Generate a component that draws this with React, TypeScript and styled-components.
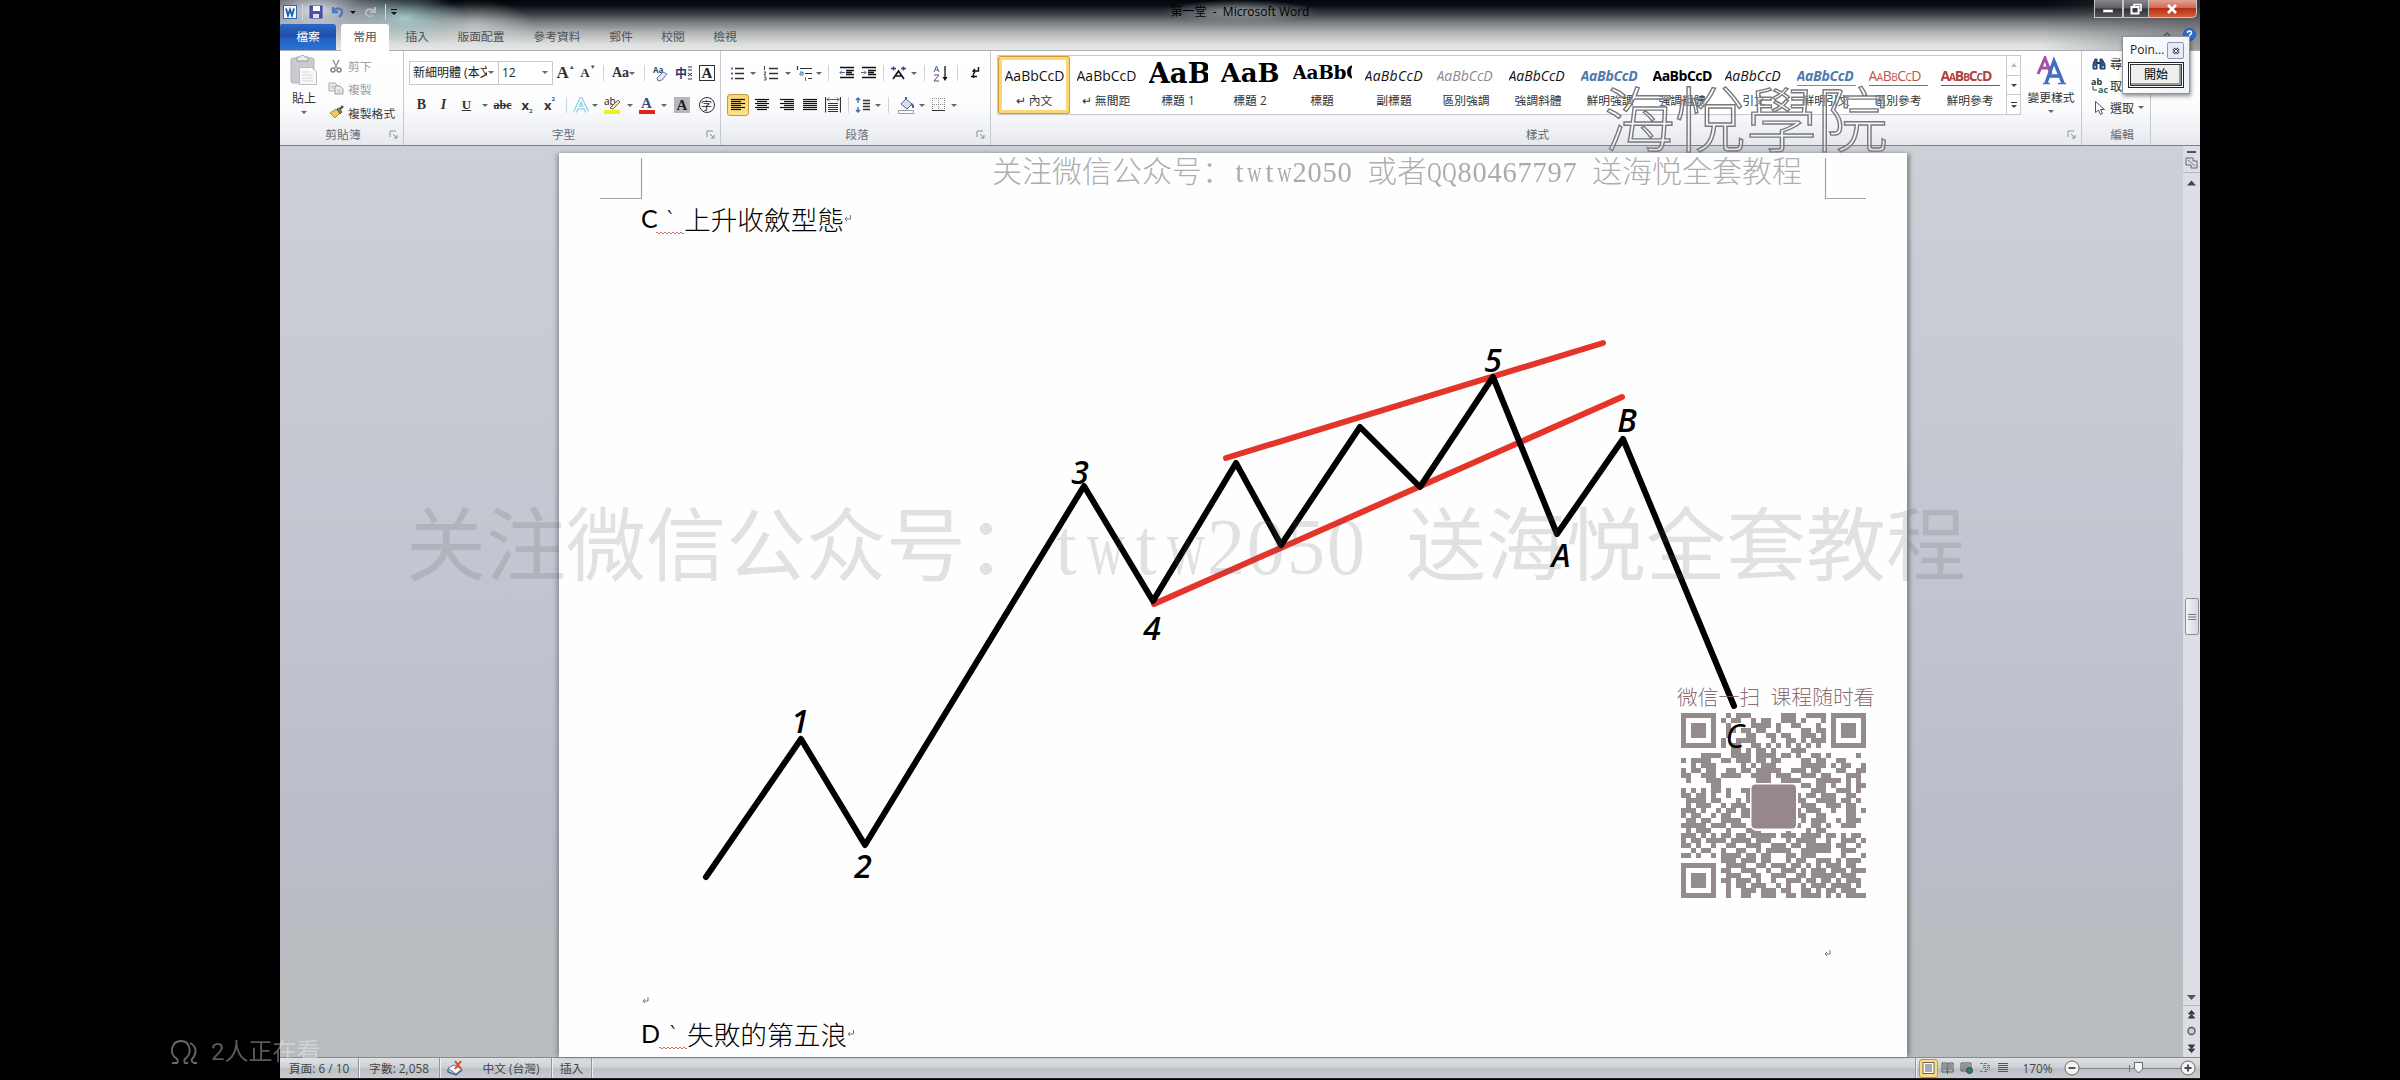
import React from 'react';
import styled, { createGlobalStyle, css } from 'styled-components';

const UI = '"Open Sans", "Noto Sans CJK TC", sans-serif';

const Global = createGlobalStyle`
  html, body { margin: 0; padding: 0; background: #000; }
  * { box-sizing: border-box; }
`;

/* ---------- frame ---------- */
const Stage = styled.div`
  position: relative;
  width: 2400px;
  height: 1080px;
  padding-left: 280px;
  background: #000;
  display: flex;
  overflow: hidden;
  font-family: ${UI};
  font-size: 12px;
  color: #333;
`;
const Win = styled.div`
  width: 1920px;
  height: 1080px;
  display: flex;
  flex-direction: column;
  background: #000;
`;
const Head = styled.header`
  height: 51px;
  display: flex;
  flex-direction: column;
  background:
    radial-gradient(ellipse 60px 26px at 125px 18px, rgba(190, 232, 232, 0.75), transparent),
    radial-gradient(ellipse 90px 34px at 35px 10px, rgba(226, 230, 240, 0.95), transparent),
    radial-gradient(ellipse 60px 26px at 195px 26px, rgba(225, 230, 230, 0.55), transparent),
    linear-gradient(90deg, transparent 1760px, rgba(90, 92, 98, 0.55) 1920px),
    linear-gradient(#02070c 0, #060c12 5px, #33383d 13px, #777a7c 22px, #b4b6b6 33px, #dcdfde 44px, #e6e8e8 50px);
  border-bottom: 1px solid #a9adb2;
`;
const TitleRow = styled.div`
  height: 24px;
  display: flex;
  justify-content: space-between;
  align-items: flex-start;
`;
const Quick = styled.div`
  width: 543px;
  height: 24px;
  padding-left: 2px;
  display: flex;
  align-items: center;
`;
const Title = styled.div`
  height: 24px;
  line-height: 23px;
  padding: 0 8px;
  font-size: 12px;
  white-space: pre;
  color: #000;
  background: radial-gradient(ellipse at center, rgba(150, 154, 158, 0.75) 20%, transparent 72%);
`;
const WinButtons = styled.div`
  width: 543px;
  padding-right: 3px;
  display: flex;
  justify-content: flex-end;
`;
const WinButton = styled.div<{ $w: number; $close?: boolean }>`
  width: ${p => p.$w}px;
  height: 18px;
  display: flex;
  align-items: center;
  justify-content: center;
  border: 1px solid #c3c5c9;
  border-top: 0;
  border-left-width: ${p => (p.$close ? 0 : 1)}px;
  border-radius: ${p => (p.$close ? '0 0 5px 0' : '0')};
  background: ${p => (p.$close
    ? 'linear-gradient(#dfa493, #cf6a55 45%, #b92d12 50%, #d4603f)'
    : 'linear-gradient(#85878b, #5b5d62 48%, #2e3035 52%, #55575c)')};
`;
const Tabs = styled.nav`
  height: 26px;
  display: flex;
  align-items: stretch;
`;
const Tab = styled.div<{ $w: number; $kind?: 'file' | 'on' }>`
  width: ${p => p.$w}px;
  text-align: center;
  line-height: 25px;
  font-size: 11.8px;
  color: #4e5257;
  ${p => p.$kind === 'file' && css`
    color: #fff;
    background: linear-gradient(#2c68c4, #1c4fa8 45%, #2462c2 60%, #2a74d8);
    border-radius: 2px 3px 0 0;
    margin-right: 5px;
  `}
  ${p => p.$kind === 'on' && css`
    background: #fff;
    border-radius: 3px 3px 0 0;
    height: 27px;
  `}
`;
const HeadEnd = styled.div`
  flex: 1;
  display: flex;
  justify-content: flex-end;
  align-items: center;
  gap: 11px;
  padding: 0 4px 6px 0;
`;

/* ---------- ribbon ---------- */
const Ribbon = styled.section`
  height: 95px;
  display: flex;
  background: linear-gradient(#fff 0, #fdfdfe 50px, #f1f3f6 75px, #e6e8ed 94px);
  border-bottom: 1px solid #7d8088;
`;
const Group = styled.div<{ $w: number }>`
  width: ${p => p.$w}px;
  height: 94px;
  display: flex;
  flex-direction: column;
  border-right: 1px solid #c5c8cd;
`;
const GroupBody = styled.div`
  height: 73px;
  display: flex;
`;
const GroupFoot = styled.div`
  height: 20px;
  display: flex;
  align-items: center;
  justify-content: center;
  padding: 0 5px 0 17px;
  font-size: 11.8px;
  line-height: 18px;
  color: #646b78;
`;
const FootText = styled.span`
  flex: 1;
  text-align: center;
`;
const Rows = styled.div<{ $l: number }>`
  height: 73px;
  display: flex;
  flex-direction: column;
  padding: 6px 0 0 ${p => p.$l}px;
`;
const Row = styled.div<{ $h: number; $l?: number }>`
  height: ${p => p.$h}px;
  display: flex;
  align-items: center;
  padding-left: ${p => p.$l ?? 0}px;
`;
const Slot = styled.div<{ $w: number }>`
  flex: none;
  width: ${p => p.$w}px;
  display: flex;
  align-items: center;
  justify-content: center;
`;
const Selected = styled(Slot)`
  height: 22px;
  border: 1px solid #c49b3e;
  border-radius: 3px;
  background: linear-gradient(#fbd575, #fde38a);
`;
const Sep = styled.i`
  width: 1px;
  height: 16px;
  background: #d0d3d8;
`;
const Caret = styled.i<{ $c?: string }>`
  width: 0;
  height: 0;
  border: 3px solid transparent;
  border-top-color: ${p => p.$c ?? '#666'};
  border-bottom: 0;
`;
const Paste = styled.div`
  width: 48px;
  display: flex;
  flex-direction: column;
  align-items: center;
  padding-top: 4px;
  gap: 3px;
  line-height: 19px;
  color: #333;
`;
const ClipList = styled.div`
  display: flex;
  flex-direction: column;
  padding-top: 3px;
`;
const ClipItem = styled.div<{ $off?: boolean }>`
  height: 23.5px;
  display: flex;
  align-items: center;
  gap: 4px;
  color: ${p => (p.$off ? '#a0a0a0' : '#3c3c3c')};
  font-size: 11.8px;
`;
const Combo = styled.div<{ $w: number }>`
  width: ${p => p.$w}px;
  height: 24px;
  border: 1px solid #c6cad0;
  background: #fff;
  display: flex;
  align-items: center;
  justify-content: space-between;
  padding: 0 4px 2px 3px;
  overflow: hidden;
  color: #222;
  & + & { border-left: 0; }
`;
const Clip = styled.span<{ $w: number }>`
  width: ${p => p.$w}px;
  overflow: hidden;
  white-space: nowrap;
  line-height: 19px;
`;
const Glyph = styled.span<{ $s: number; $b?: boolean; $i?: boolean; $u?: boolean; $x?: boolean; $sans?: boolean }>`
  font-family: ${p => (p.$sans ? '"Open Sans", sans-serif' : '"Liberation Serif", serif')};
  font-size: ${p => p.$s}px;
  line-height: 18px;
  font-weight: ${p => (p.$b ? 700 : 400)};
  font-style: ${p => (p.$i ? 'italic' : 'normal')};
  text-decoration: ${p => (p.$u ? 'underline' : p.$x ? 'line-through' : 'none')};
  color: #333;
`;
const Tiny = styled.small<{ $up?: boolean }>`
  font: 700 6px/6px "Open Sans", sans-serif;
  color: #37577e;
  align-self: ${p => (p.$up ? 'flex-start' : 'flex-end')};
`;
const Boxed = styled.span<{ $fill?: string; $line?: string; $round?: boolean }>`
  width: 16px;
  height: 16px;
  display: flex;
  align-items: center;
  justify-content: center;
  border: 1px solid ${p => p.$line ?? '#333'};
  border-radius: ${p => (p.$round ? 8 : 0)}px;
  background: ${p => p.$fill ?? 'transparent'};
  font: ${p => (p.$round ? '11px/14px "Noto Sans CJK TC", sans-serif' : '700 15px/15px "Liberation Serif", serif')};
  color: #222;
`;
const Underbar = styled.span<{ $c: string }>`
  width: 16px;
  height: 18px;
  border-bottom: 4px solid ${p => p.$c};
  text-align: center;
  font: 700 15px/14px "Liberation Serif", serif;
  color: #35507d;
`;

/* ---------- style gallery ---------- */
const Gallery = styled.div`
  width: 1026px;
  height: 60px;
  margin: 4px 0 0 6px;
  display: flex;
  border: 1px solid #c6c8cc;
  background: #fff;
`;
const StyleCell = styled.div<{ $on?: boolean }>`
  flex: none;
  width: 72px;
  height: 58px;
  display: flex;
  flex-direction: column;
  align-items: center;
  ${p => p.$on && css`
    border-radius: 3px;
    box-shadow: inset 0 0 0 1px #d59a3b, inset 0 0 0 4px #fbd873;
  `}
`;
type PreviewProps = { $s: number; $c: string; $b?: boolean; $i?: boolean; $serif?: boolean; $line?: string; $caps?: boolean; $ls?: number };
const Preview = styled.div<PreviewProps>`
  width: 59px;
  height: 24px;
  margin-top: 6px;
  display: flex;
  align-items: flex-end;
  overflow: hidden;
  white-space: nowrap;
  font-family: ${p => (p.$serif ? '"DejaVu Serif", "Liberation Serif", serif' : '"Open Sans", sans-serif')};
  font-size: ${p => p.$s}px;
  line-height: ${p => (p.$serif ? 24 : 19)}px;
  font-weight: ${p => (p.$b ? 700 : 400)};
  font-style: ${p => (p.$i ? 'italic' : 'normal')};
  font-variant: ${p => (p.$caps ? 'small-caps' : 'normal')};
  color: ${p => p.$c};
  border-bottom: ${p => (p.$line ? `1px solid ${p.$line}` : '1px solid transparent')};
  letter-spacing: ${p => p.$ls ?? 0}px;
`;
const StyleName = styled.div`
  height: 20px;
  line-height: 18px;
  margin-top: 5px;
  white-space: nowrap;
  font-size: 11.8px;
`;
const GalleryNav = styled.div`
  width: 14px;
  display: flex;
  flex-direction: column;
  border-left: 1px solid #c6c8cc;
`;
const NavCell = styled.div`
  flex: 1;
  display: flex;
  align-items: center;
  justify-content: center;
  & + & { border-top: 1px solid #c6c8cc; }
`;
const ChangeStyles = styled.div`
  width: 60px;
  display: flex;
  flex-direction: column;
  align-items: center;
  padding-top: 5px;
  gap: 3px;
  line-height: 19px;
  font-size: 11.8px;
`;

/* ---------- document ---------- */
const Doc = styled.main`
  height: 911px;
  display: flex;
  background: linear-gradient(#cdd0d5 0, #cacdd5 120px, #c3c6d0 420px, #babdc8 700px, #b9bcc0 800px, #b9bcbf 911px);
`;
const PageSlot = styled.div`
  flex: 1;
  padding: 7px 0 0 279px;
`;
const Page = styled.article`
  position: relative;
  width: 1348px;
  height: 904px;
  background: #fefefe;
  box-shadow: 4px 0 4px -1px rgba(80, 84, 94, 0.55), -3px 0 4px -1px rgba(80, 84, 94, 0.5);
`;
const Drawing = styled.svg`
  position: absolute;
  left: 0;
  top: 0;
  overflow: visible;
`;
const Line = styled.div<{ $t: number }>`
  position: absolute;
  left: 82px;
  top: ${p => p.$t}px;
  height: 36px;
  display: flex;
  align-items: center;
  font-family: Lato, "Noto Sans CJK TC", sans-serif;
  font-size: 26.7px;
  font-weight: 300;
  color: #000;
  white-space: nowrap;
`;
const Latin = styled.span<{ $w: number }>`
  font-weight: 400;
  font-size: 25px;
  width: ${p => p.$w}px;
`;
const Tick = styled.span`
  width: 28px;
  height: 32px;
  line-height: 36px;
  padding-left: 9px;
  background: repeating-linear-gradient(90deg, #d66 0 2px, transparent 2px 4px) 0 30px / 28px 1px no-repeat,
    repeating-linear-gradient(90deg, transparent 0 2px, #d66 2px 4px) 0 31px / 28px 1px no-repeat;
`;
const Scroll = styled.aside`
  width: 17px;
  height: 911px;
  display: flex;
  flex-direction: column;
  align-items: center;
  background: #dcdde5;
`;
const ScrollTrack = styled.div`
  flex: 1;
  width: 17px;
  display: flex;
  justify-content: center;
  padding-top: 412px;
`;
const Thumb = styled.div`
  width: 14px;
  height: 37px;
  border: 1px solid #8b8f9a;
  border-radius: 2px;
  background: linear-gradient(90deg, #f4f4f7, #d5d7de);
  display: flex;
  align-items: center;
  justify-content: center;
`;

/* ---------- status bar ---------- */
const Status = styled.footer`
  height: 22px;
  display: flex;
  align-items: center;
  justify-content: space-between;
  border-top: 1px solid #888b8f;
  border-bottom: 1px solid #1d1f22;
  background: linear-gradient(#dfe2e4, #cfd2d5 45%, #bcc0c4 55%, #c9ccd0);
  color: #444;
  font-size: 11.8px;
`;
const StatusSide = styled.div`
  height: 20px;
  display: flex;
  align-items: center;
`;
const StatusItem = styled.div<{ $w: number }>`
  width: ${p => p.$w}px;
  height: 20px;
  padding-bottom: 2px;
  display: flex;
  align-items: center;
  justify-content: center;
  white-space: pre;
  border-right: 1px solid #92969b;
  box-shadow: 1px 0 0 #eceef0;
`;
const ViewOn = styled(Slot)`
  height: 19px;
  border: 1px solid #c9962f;
  border-radius: 3px;
  background: #fbdc84;
`;

/* ---------- overlays ---------- */
const Popup = styled.div`
  position: absolute;
  left: 2122px;
  top: 36px;
  width: 68px;
  height: 58px;
  padding: 5px 5px;
  display: flex;
  flex-direction: column;
  gap: 3px;
  background: linear-gradient(100deg, #fdfeff, #eef3fa);
  border: 1px solid #8f9399;
  box-shadow: 1px 2px 4px rgba(0, 0, 0, 0.45);
`;
const PopupTop = styled.div`
  display: flex;
  justify-content: space-between;
  padding-left: 2px;
  line-height: 15px;
  height: 17px;
  color: #222;
`;
const PopupClose = styled.div`
  width: 17px;
  height: 17px;
  border: 1px solid #8a98ad;
  border-radius: 2px;
  background: #e3ecf7;
  display: flex;
  align-items: center;
  justify-content: center;
`;
const PopupButton = styled.div`
  height: 27px;
  border: 1px solid #222;
  background: #eeeeec;
  box-shadow: inset 0 0 0 1px #fff, inset 0 0 0 2px #333, inset -2px -2px 0 2px #999;
  display: flex;
  align-items: center;
  justify-content: center;
  line-height: 20px;
  color: #000;
`;
const Mark = styled.div<{ $x: number; $y: number; $s: number; $c: string; $lh?: number; $wt?: number }>`
  position: absolute;
  left: ${p => p.$x}px;
  top: ${p => p.$y}px;
  display: flex;
  font-family: "Liberation Serif", "Noto Sans CJK SC", serif;
  font-size: ${p => p.$s}px;
  line-height: ${p => p.$lh ?? p.$s}px;
  font-weight: ${p => p.$wt ?? 300};
  color: ${p => p.$c};
  white-space: pre;
`;
const Half = styled.span<{ $k: number }>`
  width: 0.5em;
  display: flex;
  justify-content: center;
  transform: scaleX(${p => p.$k});
`;
const Academy = styled.div`
  position: absolute;
  left: 1604px;
  top: 77px;
  font: 300 71px/76px "Noto Sans CJK TC", sans-serif;
  color: rgba(255, 255, 255, 0.35);
  -webkit-text-stroke: 1.4px #77797c;
`;
const Watching = styled.div`
  position: absolute;
  left: 169px;
  top: 1036px;
  height: 32px;
  display: flex;
  align-items: center;
  gap: 12px;
  font: 24px/32px Roboto, "Noto Sans CJK SC", sans-serif;
  color: transparent;
  background: linear-gradient(90deg, #5b5b5b 111px, rgba(226, 227, 232, 0.6) 111px);
  -webkit-background-clip: text;
  background-clip: text;
`;

/* ---------- small drawings ---------- */
const Svg = styled.svg`
  display: block;
  flex: none;
`;
const Ic = ({ w = 16, h = 16, children }: { w?: number; h?: number; children: React.ReactNode }) => (
  <Svg width={w} height={h} viewBox={`0 0 ${w} ${h}`} fill="none" stroke="#333" strokeWidth="1">{children}</Svg>
);
const Launcher = () => <Ic w={9} h={9}><path d="M1 7V1h6M4 4l4 4M8 5v3H5" stroke="#8a8e96" /></Ic>;
const lines = (list: [number, number][]) => list.map(([a, b], i) => <path key={i} d={`M${a} ${1.5 + i * 2}H${b}`} stroke="#111" strokeWidth="1.2" />);
const full: [number, number][] = [[0, 14], [0, 14], [0, 14], [0, 14], [0, 14], [0, 14]];
const leftL: [number, number][] = [[0, 14], [0, 10], [0, 14], [0, 10], [0, 14], [0, 10]];
const midL: [number, number][] = [[0, 14], [2, 12], [0, 14], [2, 12], [0, 14], [2, 12]];
const rightL: [number, number][] = [[0, 14], [4, 14], [0, 14], [4, 14], [0, 14], [4, 14]];

const IndentIcon = ({ out }: { out?: boolean }) => (
  <Ic w={16} h={14}>
    <path d="M1 1.5h14M7 4.5h8M7 6.5h6M7 8.5h8M1 11.5h14" stroke="#111" strokeWidth="1.6" />
    <path d={out ? 'M6 6.5H1M3 4.500L1 6.500L3 8.500' : 'M0 6.500H5M3 4.500L5 6.500L3 8.500'} stroke="#4a6f9f" />
  </Ic>
);

const styles: { name: string; text?: string; p: PreviewProps }[] = [
  { name: '↵ 內文', p: { $s: 14, $c: '#111' } },
  { name: '↵ 無間距', p: { $s: 14, $c: '#111' } },
  { name: '標題 1', text: 'AaBb', p: { $s: 27.5, $c: '#000', $b: true, $serif: true } },
  { name: '標題 2', text: 'AaB', p: { $s: 26, $c: '#000', $b: true, $serif: true } },
  { name: '標題', text: 'AaBbC', p: { $s: 18.5, $c: '#000', $b: true, $serif: true, $ls: -0.3 } },
  { name: '副標題', p: { $s: 14, $c: '#111', $i: true, $ls: 0.3 } },
  { name: '區別強調', p: { $s: 14, $c: '#8a8a8a', $i: true } },
  { name: '強調斜體', p: { $s: 14, $c: '#111', $i: true } },
  { name: '鮮明強調', p: { $s: 14, $c: '#4f79ad', $i: true, $b: true, $ls: -0.3 } },
  { name: '強調粗體', p: { $s: 14, $c: '#000', $b: true, $ls: -0.5 } },
  { name: '引文', p: { $s: 14, $c: '#111', $i: true } },
  { name: '鮮明引文', p: { $s: 14, $c: '#4f79ad', $i: true, $b: true, $ls: -0.3, $line: '#6a90c0' } },
  { name: '區別參考', p: { $s: 14, $c: '#b9564e', $caps: true, $ls: -0.5, $line: '#b9564e' } },
  { name: '鮮明參考', p: { $s: 14, $c: '#b5403a', $caps: true, $b: true, $ls: -1.1, $line: '#b5403a' } },
];

const qr = [
  '1111111001011100000011100111101111111',
  '1000001010110010110011101000101000001',
  '1011101001000011110100110001001011101',
  '1011101001101101100100001101101011101',
  '1011101001000110011011001110101011101',
  '1000001010011110001001101011101000001',
  '1111111010110011010101010101001111111',
  '0000000000110101101000111000000000000',
  '0000111100111101111011010011010000010',
  '1011110011011101101100001101100110000',
  '0010111000001010111000001111101011001',
  '1011011001101101111100111011000110011',
  '1100111011110011110111001110110001110',
  '0100011100000001110011110001111101010',
  '0000001100000000000000001101101001011',
  '1010101101001100000000000011100111010',
  '1101101001000100000000010110111001100',
  '0111101100010100000000011001111011010',
  '0101110010111000000000001110011101100',
  '1110100101101100000000010111001001101',
  '1011001011001100000000011001100001100',
  '0110110011110000000000001011100101110',
  '1111101110111000000000010011010011100',
  '0101110001000111000001000101100000000',
  '1110101011011011111011101111011010110',
  '1011011110111101110001011110010011101',
  '1101001001100111001110110111110110010',
  '0010110010011001011111001111110011100',
  '1101001011110110110001101110000010001',
  '0000000011101110110001011001110101110',
  '1111111001111001101110110101011101100',
  '1000001011001110010011101011101110111',
  '1011101001110011001110011011111011100',
  '1011101011011101001001110110110101110',
  '1011101001011011100101001011101111010',
  '1000001001001110111011001101011011100',
  '1111111001001100111001101111010101111',
];
const qrPath = qr.map((r, y) => [...r].map((c, x) => (c === '1' ? `M${x} ${y}h1v1h-1z` : '')).join('')).join('');

const squeeze: Record<string, number> = { w: 0.66, Q: 0.66 };
const WideText = ({ text }: { text: string }) => (
  <>
    {text.split(/([\x20-\x7e]+)/).filter(Boolean).map((run, i) =>
      /^[\x20-\x7e]/.test(run)
        ? [...run].map((c, k) => <Half key={`${i}-${k}`} $k={squeeze[c] ?? 0.95}>{c}</Half>)
        : <span key={i}>{run}</span>)}
  </>
);

const labels: [string, number, number][] = [
  ['1', 800, 733], ['2', 863, 878], ['3', 1080, 484], ['4', 1152, 640],
  ['5', 1493, 372], ['A', 1561, 567], ['B', 1627, 432], ['C', 1735, 748],
];

export default function App() {
  return (
    <Stage>
      <Global />
      <Win>
        <Head>
          <TitleRow>
            <Quick>
              <Slot $w={15}>
                <Ic w={14} h={14}><rect x="0.500" y="0.500" width="13" height="13" fill="#f2f6fc" stroke="#2d6cb0" /><path d="M3 3.500l2 7 2-6 2 6 2-7" stroke="#1d5ca8" strokeWidth="1.800" /></Ic>
              </Slot>
              <Slot $w={10}><Sep /></Slot>
              <Slot $w={18}>
                <Ic w={14} h={14}><path d="M1 1h12v12H1z" fill="#4f51a8" stroke="#3b3d8c" /><path d="M4 1h7v5H4z" fill="#fff" stroke="none" /><path d="M4 9h6v4H4z" fill="#dfe2f2" stroke="none" /></Ic>
              </Slot>
              <Slot $w={25}>
                <Ic w={14} h={14}><path d="M2 6c4-4 10-3 9 2-.5 2-2 3-3 4M7 7H2V2" stroke="#4f78c0" strokeWidth="2.400" /></Ic>
              </Slot>
              <Slot $w={6}><Caret $c="#111" /></Slot>
              <Slot $w={27}>
                <Ic w={13} h={13}><path d="M11 5c-3-3-9-2-8 3 1 3 5 3 7 1M7 6h5V1" stroke="#b6b9be" strokeWidth="2" /></Ic>
              </Slot>
              <Slot $w={5}><Sep /></Slot>
              <Slot $w={11}><Ic w={8} h={8}><path d="M1 1.500h6" stroke="#111" /><path d="M1 4h6l-3 3z" fill="#111" stroke="none" /></Ic></Slot>
            </Quick>
            <Title>{'第一堂  -  Microsoft Word'}</Title>
            <WinButtons>
              <WinButton $w={29}><Ic w={12} h={10}><rect x="1" y="5.500" width="10" height="3" fill="#fff" stroke="#555" strokeWidth="0.500" /></Ic></WinButton>
              <WinButton $w={26}><Ic w={12} h={12}><path d="M4 3.500V1.500h7v6H9" stroke="#fff" strokeWidth="1.600" /><rect x="1.500" y="4" width="7" height="6.500" stroke="#fff" strokeWidth="2" /></Ic></WinButton>
              <WinButton $w={48} $close><Ic w={12} h={10}><path d="M2 1l8 8M10 1L2 9" stroke="#fff" strokeWidth="2.600" /></Ic></WinButton>
            </WinButtons>
          </TitleRow>
          <Tabs>
            <Tab $w={56} $kind="file">檔案</Tab>
            <Tab $w={48} $kind="on">常用</Tab>
            <Tab $w={56}>插入</Tab>
            <Tab $w={72}>版面配置</Tab>
            <Tab $w={80}>參考資料</Tab>
            <Tab $w={48}>郵件</Tab>
            <Tab $w={56}>校閱</Tab>
            <Tab $w={48}>檢視</Tab>
            <HeadEnd>
              <Ic w={10} h={8}><path d="M2 6l3-3 3 3" stroke="#555" strokeWidth="1.500" /></Ic>
              <Ic w={13} h={13}><circle cx="6.500" cy="6.500" r="6" fill="#2f6fce" stroke="#2358ac" /><path d="M4.500 5c0-3 4-2.500 4 0 0 1.300-2 1.500-2 3M6.500 9v1.500" stroke="#fff" strokeWidth="1.400" /></Ic>
            </HeadEnd>
          </Tabs>
        </Head>

        <Ribbon>
          <Group $w={124}>
            <GroupBody>
              <Paste>
                <Ic w={28} h={31}>
                  <rect x="1" y="3" width="23" height="25" rx="2" fill="#c9cbce" stroke="#b1b3b7" />
                  <path d="M7 2h3c0-2 5-2 5 0h3v4H7z" fill="#eceded" stroke="#9b9da1" />
                  <path d="M9.500 12.500h12l5 4v13h-17z" fill="#fafafa" stroke="#bbb" />
                  <path d="M12 17h8M12 20h11M12 23h11M12 26h11" stroke="#d5d5d5" />
                </Ic>
                <span>貼上</span>
                <Caret />
              </Paste>
              <ClipList>
                <ClipItem $off>
                  <Slot $w={16}><Ic w={12} h={14}><path d="M3 1l4 8M9 1L5 9" stroke="#999" strokeWidth="1.500" /><circle cx="3" cy="11" r="2" stroke="#888" strokeWidth="1.500" /><circle cx="9" cy="11" r="2" stroke="#888" strokeWidth="1.500" /></Ic></Slot>
                  剪下
                </ClipItem>
                <ClipItem $off>
                  <Slot $w={16}><Ic w={16} h={13}><path d="M1 1h6l2 2v6H1z" fill="#eee" stroke="#aaa" /><path d="M7 4h5l3 3v5H7z" fill="#eee" stroke="#999" /><path d="M9 8h4M9 10h4M3 4h3M3 6h3" stroke="#bbb" /></Ic></Slot>
                  複製
                </ClipItem>
                <ClipItem>
                  <Slot $w={16}><Ic w={15} h={14}><path d="M1 8l6-4 4 4-5 5z" fill="#f0c95a" stroke="#b08a2e" /><path d="M8 4l2-1 3 4-2 2z" fill="#888" stroke="#555" /><path d="M11 4l3-3" stroke="#4a4a4a" strokeWidth="2.400" /></Ic></Slot>
                  複製格式
                </ClipItem>
              </ClipList>
            </GroupBody>
            <GroupFoot><FootText>剪貼簿</FootText><Launcher /></GroupFoot>
          </Group>

          <Group $w={317}>
            <Rows $l={5}>
              <Row $h={32}>
                <Combo $w={90}><Clip $w={74}>新細明體 (本文)</Clip><Caret /></Combo>
                <Combo $w={54}><span>12</span><Caret /></Combo>
                <Slot $w={25}><Glyph $s={17} $b>A</Glyph><Tiny $up>▲</Tiny></Slot>
                <Slot $w={20}><Glyph $s={13} $b>A</Glyph><Tiny $up>▼</Tiny></Slot>
                <Slot $w={10}><Sep /></Slot>
                <Slot $w={31}><Glyph $s={14} $b>Aa</Glyph><Caret /></Slot>
                <Slot $w={10}><Sep /></Slot>
                <Slot $w={23}><Ic w={17} h={17}><text x="1" y="8" fontSize="8" fontWeight="700" fill="#334d75" stroke="none">Aa</text><path d="M5 13l6-6 4 2-5 6-4 1z" fill="#e5e8f5" stroke="#6c77a0" /></Ic></Slot>
                <Slot $w={23}><Ic w={18} h={17}><text x="0" y="13" fontSize="12" fontWeight="700" fill="#2b3677" stroke="none">中</text><path d="M13 2h4M13 5h4M13 8l4 3M17 8l-4 3M13 14h4" stroke="#333" /></Ic></Slot>
                <Slot $w={24}><Boxed>A</Boxed></Slot>
              </Row>
              <Row $h={32} $l={1}>
                <Slot $w={23}><Glyph $s={14} $b>B</Glyph></Slot>
                <Slot $w={21}><Glyph $s={14} $b $i>I</Glyph></Slot>
                <Slot $w={25}><Glyph $s={13} $b $u>U</Glyph></Slot>
                <Slot $w={11}><Caret /></Slot>
                <Slot $w={25}><Glyph $s={12} $b $x>abc</Glyph></Slot>
                <Slot $w={24}><Glyph $s={13} $b $sans>x</Glyph><Tiny>2</Tiny></Slot>
                <Slot $w={21}><Glyph $s={13} $b $sans>x</Glyph><Tiny $up>2</Tiny></Slot>
                <Slot $w={13}><Sep /></Slot>
                <Slot $w={17}><Ic w={17} h={17}><path d="M2 15L8 2l6 13M5 10.500h7" stroke="#8fd0ea" strokeWidth="4" /><path d="M2 15L8 2l6 13M5 10.500h7" stroke="#fff" strokeWidth="1.400" /></Ic></Slot>
                <Slot $w={9}><Caret /></Slot>
                <Slot $w={26}><Ic w={17} h={18}><path d="M0 14h16v4H0z" fill="#f6ee24" stroke="none" /><text x="0" y="9" fontSize="10" fill="#111" stroke="none">ab</text><path d="M6 12l8-8 2 2-7 7z" fill="#f0e2b0" stroke="#666" /></Ic></Slot>
                <Slot $w={9}><Caret /></Slot>
                <Slot $w={25}><Underbar $c="#dd2418">A</Underbar></Slot>
                <Slot $w={10}><Caret /></Slot>
                <Slot $w={26}><Boxed $fill="#b5b7ba" $line="#b5b7ba">A</Boxed></Slot>
                <Slot $w={23}><Boxed $round>字</Boxed></Slot>
              </Row>
            </Rows>
            <GroupFoot><FootText>字型</FootText><Launcher /></GroupFoot>
          </Group>

          <Group $w={270}>
            <Rows $l={6}>
              <Row $h={32}>
                <Slot $w={21}><Ic w={15} h={14}><path d="M5 2.500h9M5 7.500h9M5 12.500h9" strokeWidth="1.300" /><path d="M1 1.500h2v2H1zM1 6.500h2v2H1zM1 11.500h2v2H1z" fill="#55709c" stroke="none" /></Ic></Slot>
                <Slot $w={10}><Caret /></Slot>
                <Slot $w={26}><Ic w={16} h={15}><path d="M6 2.500h9M6 7.500h9M6 12.500h9" strokeWidth="1.300" /><path d="M1.500 0v4M1 6h2l-2 3h2M1 11h2v3H1" stroke="#444" /></Ic></Slot>
                <Slot $w={8}><Caret /></Slot>
                <Slot $w={24}><Ic w={17} h={15}><path d="M1.500 0v4M4 2.500h12M9 7.500h7M12 12.500h4" strokeWidth="1.200" /><path d="M4 6h3v3H4v-2h3M9.500 11v4" stroke="#3f86b5" /></Ic></Slot>
                <Slot $w={6}><Caret /></Slot>
                <Slot $w={13}><Sep /></Slot>
                <Slot $w={23}><IndentIcon out /></Slot>
                <Slot $w={21}><IndentIcon /></Slot>
                <Slot $w={8}><Sep /></Slot>
                <Slot $w={23}><Ic w={17} h={14}><path d="M3 13l5.500-8L14 13M5 10h7" stroke="#111" strokeWidth="1.600" /><path d="M1 2.500h5M3.500 0.500v4M11 2.500h5M13.500 0.500v4" stroke="#2c3f86" strokeWidth="1.300" /></Ic></Slot>
                <Slot $w={7}><Caret /></Slot>
                <Slot $w={14}><Sep /></Slot>
                <Slot $w={20}><Ic w={16} h={17}><path d="M1 7l2.500-6L6 7M2 5h3" stroke="#4666a4" /><path d="M1 10h5l-5 6h5" stroke="#7a3f75" /><path d="M12 1v13" stroke="#111" strokeWidth="1.300" /><path d="M9.500 12h5L12 16z" fill="#111" stroke="none" /></Ic></Slot>
                <Slot $w={12}><Sep /></Slot>
                <Slot $w={22}><Ic w={13} h={14}><path d="M10.500 1v4H5M7 3L5 5l2 2M5.500 7v5M3 10.500h6" stroke="#111" strokeWidth="1.400" /></Ic></Slot>
              </Row>
              <Row $h={32}>
                <Selected $w={22}><Ic w={14} h={14}>{lines(leftL)}</Ic></Selected>
                <Slot $w={26}><Ic w={14} h={14}>{lines(midL)}</Ic></Slot>
                <Slot $w={23}><Ic w={14} h={14}>{lines(rightL)}</Ic></Slot>
                <Slot $w={24}><Ic w={14} h={14}>{lines(full)}</Ic></Slot>
                <Slot $w={22}><Ic w={16} h={16}><path d="M0.500 0v15.500M15.500 0v15.500M3 6.500h10M3 8.500h10M3 10.500h10M3 12.500h10M3 14.500h10" strokeWidth="1.200" /><path d="M2 2.500h12M4 .5l-2 2 2 2M12 .5l2 2-2 2" stroke="#3a69b0" /></Ic></Slot>
                <Slot $w={8}><Sep /></Slot>
                <Slot $w={22}><Ic w={16} h={16}><path d="M8 3.500h7M8 6.500h7M8 9.500h7M8 12.500h7" strokeWidth="1.300" /><path d="M3 1v5M1 3l2-2 2 2M3 15v-5M1 13l2 2 2-2" stroke="#3a69b0" strokeWidth="1.300" /></Ic></Slot>
                <Slot $w={7}><Caret /></Slot>
                <Slot $w={15}><Sep /></Slot>
                <Slot $w={21}><Ic w={17} h={17}><path d="M3 7l5-5 6 5-5 5z" fill="#d6dded" stroke="#53678c" /><path d="M8 2V0M13 7c3 1 2 3 2 4" stroke="#3f64a0" strokeWidth="2" /><path d="M.5 13.500h15v3H.5z" fill="#fff" stroke="#999" /></Ic></Slot>
                <Slot $w={10}><Caret /></Slot>
                <Slot $w={24}><Ic w={14} h={14}><path d="M.5 0v13M6.500 0v13M12.500 0v13M0 .5h13M0 6.500h13" stroke="#888" strokeDasharray="1 1" /><path d="M0 12.500h13" stroke="#333" /></Ic></Slot>
                <Slot $w={6}><Caret /></Slot>
              </Row>
            </Rows>
            <GroupFoot><FootText>段落</FootText><Launcher /></GroupFoot>
          </Group>

          <Group $w={1091}>
            <GroupBody>
              <Gallery>
                {styles.map((s, i) => (
                  <StyleCell key={s.name} $on={i === 0}>
                    <Preview {...s.p}>{s.text ?? 'AaBbCcD'}</Preview>
                    <StyleName>{s.name}</StyleName>
                  </StyleCell>
                ))}
                <GalleryNav>
                  <NavCell><Ic w={6} h={4}><path d="M0 4h6L3 0z" fill="#bbb" stroke="none" /></Ic></NavCell>
                  <NavCell><Caret $c="#444" /></NavCell>
                  <NavCell><Ic w={8} h={8}><path d="M1 1.500h6" /><path d="M1 4h6l-3 3z" fill="#444" stroke="none" /></Ic></NavCell>
                </GalleryNav>
              </Gallery>
              <ChangeStyles>
                <Ic w={30} h={29}>
                  <path d="M2 18L9 2l6 16M5 12h8" stroke="#a94f9f" strokeWidth="3" />
                  <path d="M10 27L18 5l9 22M13 20h10" stroke="#3f6fc4" strokeWidth="3.400" />
                  <path d="M7 27.500h7M22 27.500h8" stroke="#3f6fc4" strokeWidth="1.600" />
                </Ic>
                <span>變更樣式</span>
                <Caret />
              </ChangeStyles>
            </GroupBody>
            <GroupFoot><FootText>樣式</FootText><Launcher /></GroupFoot>
          </Group>

          <Group $w={69}>
            <GroupBody>
              <Rows $l={6}>
                <Row $h={13}>
                  <Slot $w={22}><Ic w={16} h={14}><path d="M2 12V7l2-5h2v10zM9 12V2h2l3 5v5z" fill="#32538d" stroke="#223c6b" /><path d="M6 6h3" strokeWidth="2" /><path d="M3 10h2M11 10h2" stroke="#fff" /></Ic></Slot>尋找
                </Row>
                <Row $h={31}>
                  <Slot $w={22}><Ic w={17} h={17}><text x="0" y="8" fontSize="9" fontWeight="700" fill="#333" stroke="none">ab</text><path d="M2 9v4h4" stroke="#345" /><text x="7" y="16" fontSize="9" fontWeight="700" fill="#2d6a66" stroke="none">ac</text></Ic></Slot>取代
                </Row>
                <Row $h={13}>
                  <Slot $w={22}><Ic w={12} h={16}><path d="M2.500 1.500v11l3-2.500 2 4.500 2-1-2-4h4z" fill="#fff" stroke="#555" /></Ic></Slot>選取<Slot $w={13}><Caret /></Slot>
                </Row>
              </Rows>
            </GroupBody>
            <GroupFoot><span>編輯</span></GroupFoot>
          </Group>
        </Ribbon>

        <Doc>
          <PageSlot>
            <Page>
              <Line $t={47}><Latin $w={15}>C</Latin><Tick>`</Tick>上升收斂型態<Ic w={9} h={9}><path d="M6.500 1v4H1M3 3L1 5l2 2" stroke="#777" /></Ic></Line>
              <Line $t={862}><Latin $w={18}>D</Latin><Tick>`</Tick>失敗的第五浪<Ic w={9} h={9}><path d="M6.500 1v4H1M3 3L1 5l2 2" stroke="#777" /></Ic></Line>
              <Drawing width="1348" height="904" viewBox="559 153 1348 904" fill="none">
                <path d="M641.500 158V198.500H600M1825.500 158V198.500H1866" stroke="#a0a3a8" strokeWidth="1.200" />
                <path d="M1226 458L1603 343M1154 604L1622 397" stroke="#e5352b" strokeWidth="6" strokeLinecap="round" />
                <path d="M706 877L801 739L865 845L1084 486L1153 601L1236 463L1281 545L1360 427L1420 487L1493 377L1557 534L1623 439L1734 706" stroke="#000" strokeWidth="6" strokeLinecap="round" strokeLinejoin="round" />
                <path d="M648 997v4h-5M645 999l-2 2 2 2M1830 950v4h-5M1827 952l-2 2 2 2" stroke="#777" />
              </Drawing>
            </Page>
          </PageSlot>
          <Scroll>
            <Ic w={17} h={34}>
              <path d="M4 6h9" stroke="#555" strokeWidth="2" />
              <path d="M3 12h7v3h4v7H8v-3H3z" stroke="#666" /><path d="M5 14l7 6" stroke="#777" />
              <path d="M0 26.500h17" stroke="#b5b8c0" />
              <path d="M4 36.500h9" stroke="none" />
            </Ic>
            <Ic w={17} h={6}><path d="M4 5.500h9L8.500 0.500z" fill="#444" stroke="none" /></Ic>
            <ScrollTrack><Thumb><Ic w={8} h={8}><path d="M0 1.500h8M0 4h8M0 6.500h8" stroke="#777" /></Ic></Thumb></ScrollTrack>
            <Ic w={17} h={66}>
              <path d="M4 4h9l-4.500 5z" fill="#555" stroke="none" />
              <path d="M0 14.500h17" stroke="#b5b8c0" />
              <path d="M5.500 23L8.500 19.500L11.500 23zM5.500 27L8.500 23.500L11.500 27z" fill="#444" />
              <circle cx="8.500" cy="40" r="3.500" stroke="#555" strokeWidth="1.300" fill="#ccc" />
              <path d="M5.500 54L8.500 57.500L11.500 54zM5.500 58L8.500 61.500L11.500 58z" fill="#444" />
            </Ic>
          </Scroll>
        </Doc>

        <Status>
          <StatusSide>
            <StatusItem $w={79}>頁面: 6 / 10</StatusItem>
            <StatusItem $w={81}>字數: 2,058</StatusItem>
            <Slot $w={31}><Ic w={17} h={16}><path d="M1 8l6-3 8 4-6 5z" fill="#f4f6fa" stroke="#5b7aa6" /><path d="M1 9v3l8 3 6-5" stroke="#41689b" strokeWidth="1.400" /><path d="M8 1l6 8M14 1L8 9" stroke="#d9482b" strokeWidth="2" /></Ic></Slot>
            <StatusItem $w={81}>中文 (台灣)</StatusItem>
            <StatusItem $w={40}>插入</StatusItem>
          </StatusSide>
          <StatusSide>
            <StatusItem $w={4}> </StatusItem>
            <Slot $w={3} />
            <ViewOn $w={19}><Ic w={13} h={12}><rect x="1" y=".5" width="11" height="11" fill="#fff" stroke="#666" /><path d="M3 3h7M3 5h7M3 7h7M3 9h7" stroke="#555" /></Ic></ViewOn>
            <Slot $w={19}><Ic w={13} h={12}><path d="M1 1h5v9H1zM7 1h5v9H7zM2 3h3M2 5h3M2 7h3M8 3h3M8 5h3M8 7h3M6.500 10v2" stroke="#555" /></Ic></Slot>
            <Slot $w={18}><Ic w={13} h={12}><path d="M1 1h10v8H1zM2 3h8M2 5h8M2 7h5" stroke="#555" /><circle cx="9.500" cy="8.500" r="3" fill="#2e7a77" stroke="#345" /></Ic></Slot>
            <Slot $w={19}><Ic w={12} h={12}><path d="M1 1.500h8M4 3.500h7M4 5.500h7M6 7.500h5M1 9.500h8" stroke="#777" strokeDasharray="3 1" /></Ic></Slot>
            <Slot $w={18}><Ic w={12} h={12}><path d="M1 1.500h10M1 3.500h10M1 5.500h10M1 7.500h10M1 9.500h10" stroke="#555" /></Ic></Slot>
            <Slot $w={51}>170%</Slot>
            <Svg width="137" height="20" viewBox="0 0 137 20" fill="none" stroke="#666">
              <path d="M16 10.500H118" stroke="#888" /><path d="M66.500 7v7" stroke="#777" />
              <circle cx="9" cy="10" r="7" fill="#f4f4f5" /><path d="M5.500 10h7" stroke="#444" strokeWidth="1.800" />
              <circle cx="125" cy="10" r="7" fill="#f4f4f5" /><path d="M121.500 10h7M125 6.500v7" stroke="#444" strokeWidth="1.800" />
              <path d="M71.500 4.500h8v6.500l-4 4-4-4z" fill="#f7f7f8" />
            </Svg>
          </StatusSide>
        </Status>
      </Win>

      <Mark $x={992} $y={152} $s={30} $lh={40} $c="rgba(120,120,122,0.62)"><WideText text="关注微信公众号：twtw2050 或者QQ80467797 送海悦全套教程" /></Mark>
      <Mark $x={406} $y={494} $s={80} $lh={106} $wt={400} $c="rgba(95,92,98,0.18)"><WideText text="关注微信公众号：twtw2050 送海悦全套教程" /></Mark>
      <Mark $x={1677} $y={684} $s={20.8} $lh={28} $c="rgba(125,90,95,0.9)"><WideText text="微信一扫 课程随时看" /></Mark>
      <Overlay width="1920" height="1080" viewBox="280 0 1920 1080">
        <g transform="translate(1681 713) scale(5)" shapeRendering="crispEdges"><path d={qrPath} fill="#948b8d" /></g>
        <rect x="1750" y="783" width="48" height="48" rx="7" fill="#fefefe" />
        <rect x="1751.500" y="784.500" width="44.500" height="44" rx="4" fill="#95878a" />
        {labels.map(([t, x, y]) => <WaveLabel key={t} x={x} y={y} $thin={t === 'C'}>{t}</WaveLabel>)}
      </Overlay>
      <Academy>海悅學院</Academy>
      <Popup>
        <PopupTop>Poin...<PopupClose><Ic w={8} h={8}><path d="M1.500 1.500l5 5M6.500 1.500l-5 5" stroke="#445" strokeWidth="3" /><path d="M1.500 1.500l5 5M6.500 1.500l-5 5" stroke="#fff" /></Ic></PopupClose></PopupTop>
        <PopupButton>開始</PopupButton>
      </Popup>
      <Watching>
        <Ic w={30} h={26}><path d="M3 24h5c1-1 1-3 0-4-9-6-5-18 4-18s12 12 4 18c-1 1-1 3 0 4h3M21 4c7 3 7 11 2 16-1 1 0 3 2 4h3" stroke="#696969" strokeWidth="1.800" /></Ic>
        2人正在看
      </Watching>
    </Stage>
  );
}

const Overlay = styled.svg`
  position: absolute;
  left: 280px;
  top: 0;
  pointer-events: none;
`;
const WaveLabel = styled.text<{ $thin: boolean }>`
  font: italic ${p => (p.$thin ? 500 : 600)} 32px "Open Sans", sans-serif;
  text-anchor: middle;
  fill: #000;
`;
